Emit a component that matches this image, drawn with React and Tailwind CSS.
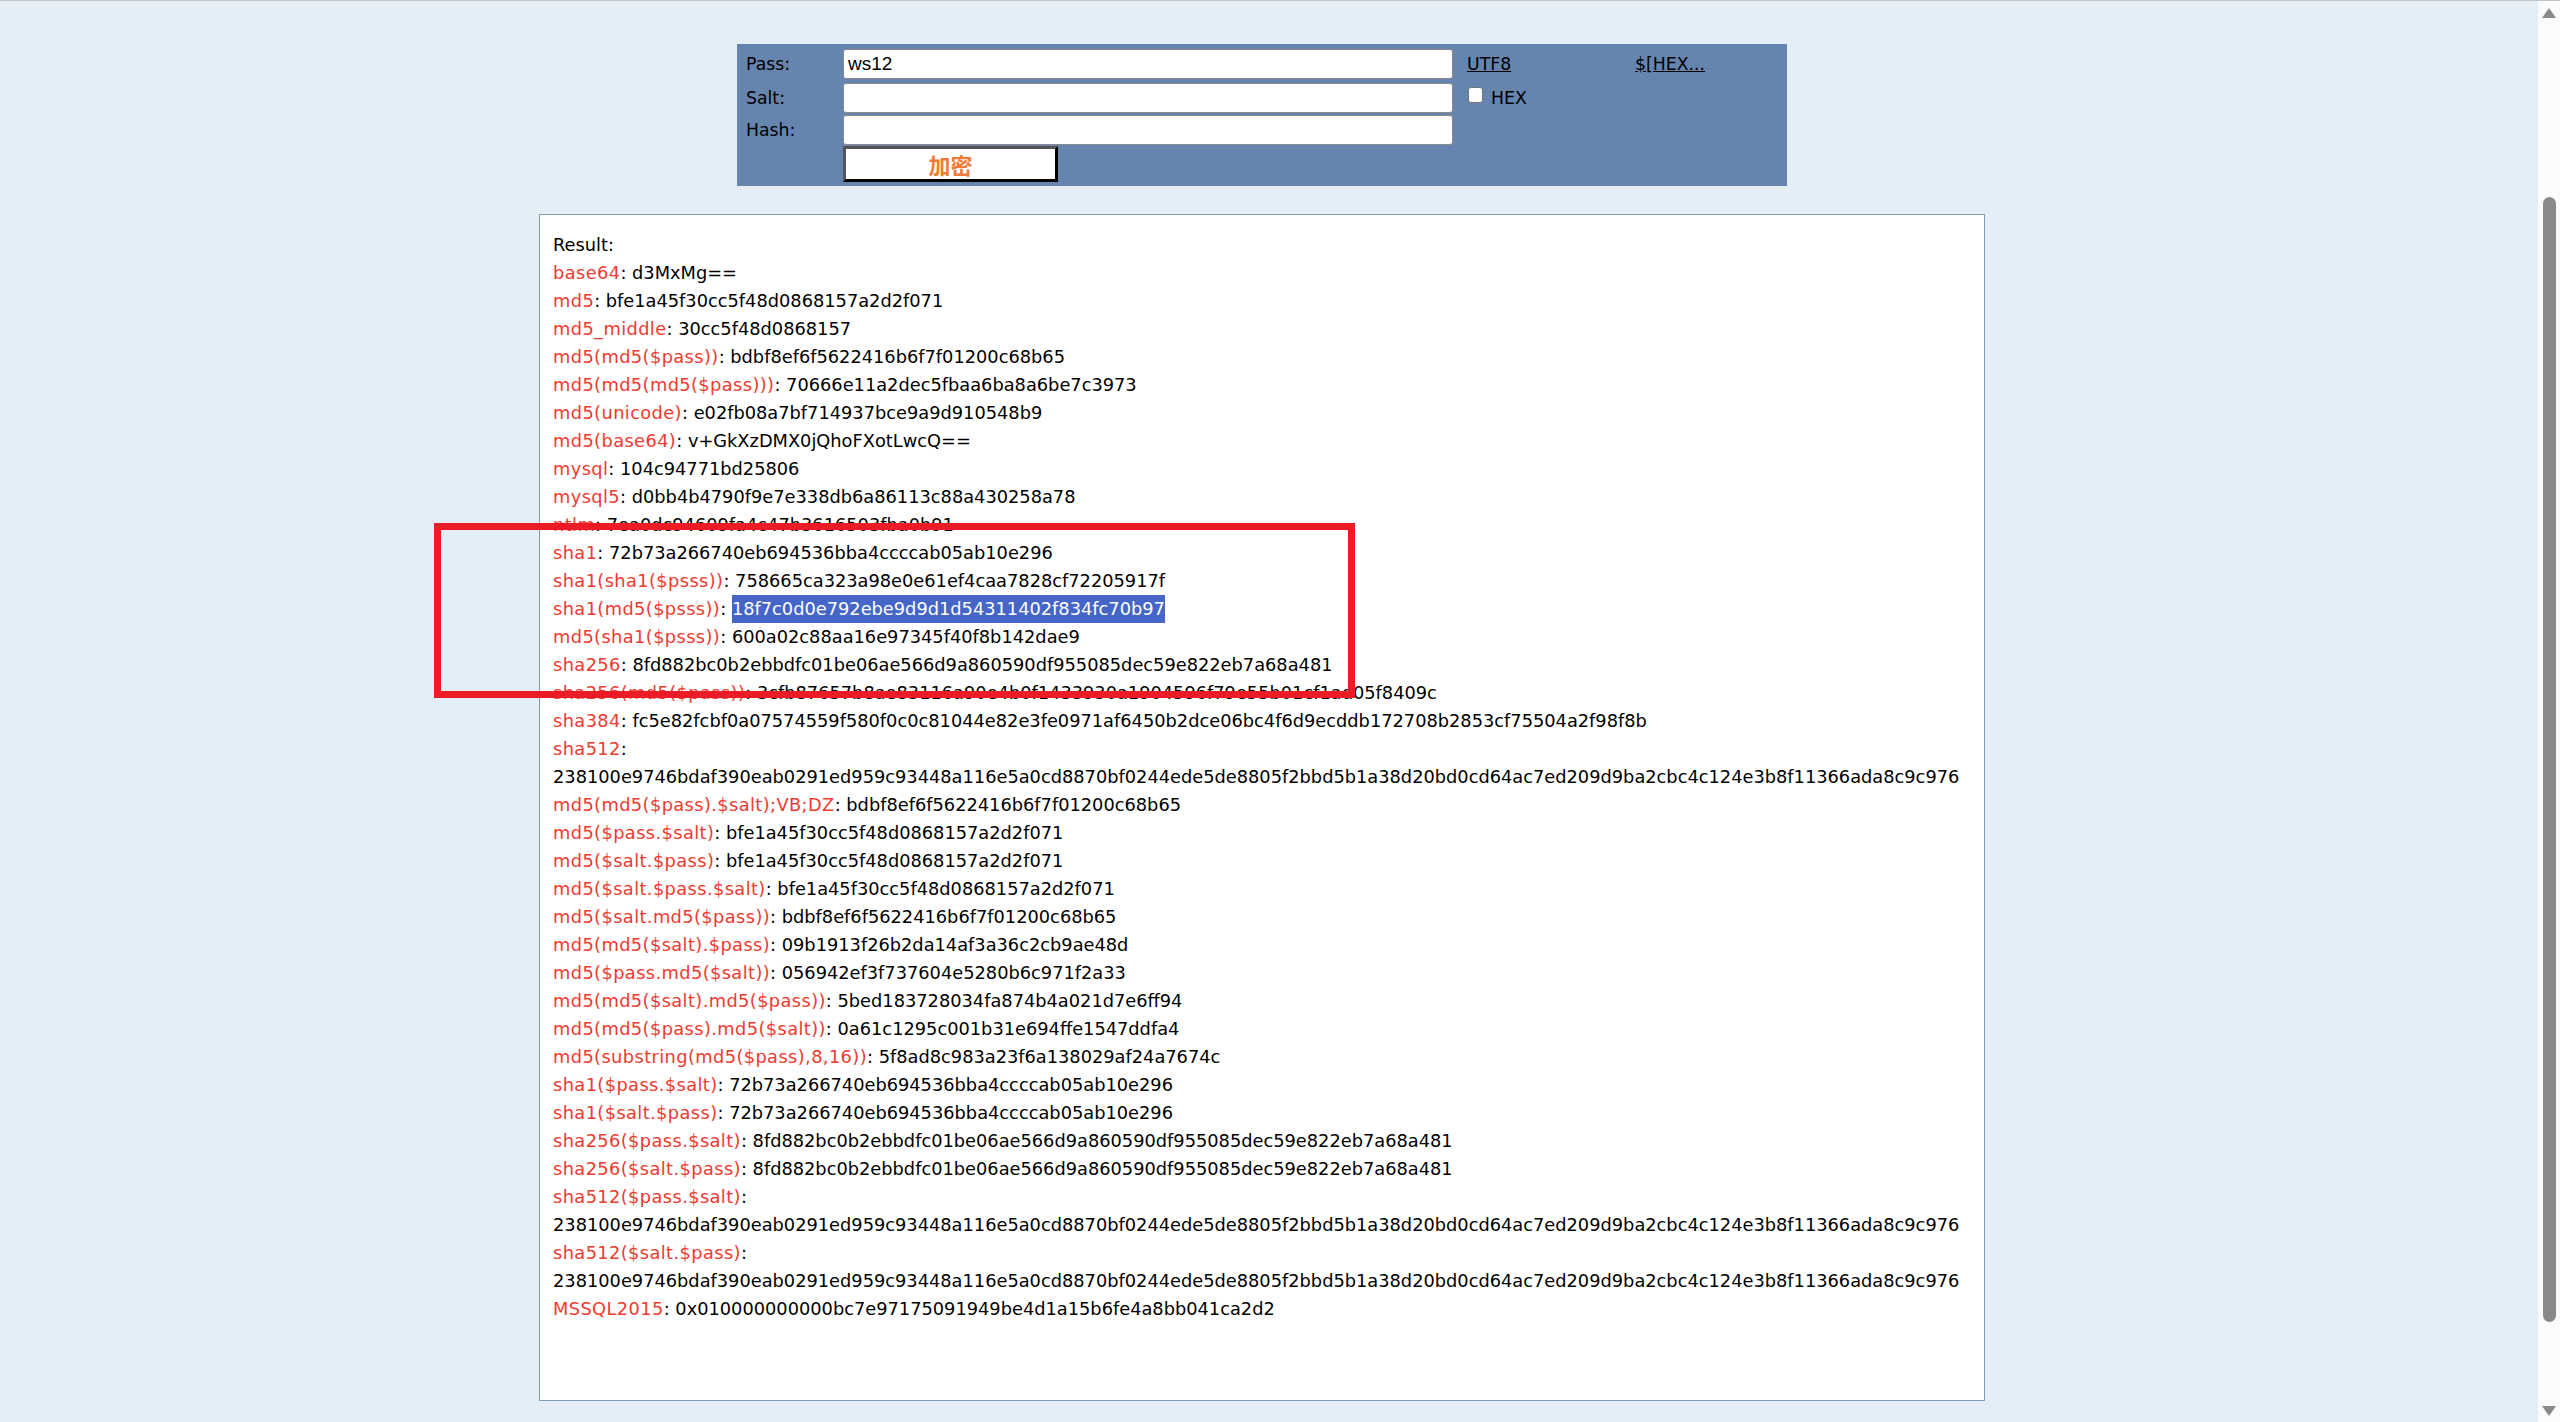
const SHA512 =
  '238100e9746bdaf390eab0291ed959c93448a116e5a0cd8870bf0244ede5de8805f2bbd5b1a38d20bd0cd64ac7ed209d9ba2cbc4c124e3b8f11366ada8c9c976';
const SHA256 = '8fd882bc0b2ebbdfc01be06ae566d9a860590df955085dec59e822eb7a68a481';
const SHA1 = '72b73a266740eb694536bba4ccccab05ab10e296';
const MD5 = 'bfe1a45f30cc5f48d0868157a2d2f071';
const MD5MD5 = 'bdbf8ef6f5622416b6f7f01200c68b65';

const lines = [
  { k: 'base64', v: 'd3MxMg==' },
  { k: 'md5', v: MD5 },
  { k: 'md5_middle', v: '30cc5f48d0868157' },
  { k: 'md5(md5($pass))', v: MD5MD5 },
  { k: 'md5(md5(md5($pass)))', v: '70666e11a2dec5fbaa6ba8a6be7c3973' },
  { k: 'md5(unicode)', v: 'e02fb08a7bf714937bce9a9d910548b9' },
  { k: 'md5(base64)', v: 'v+GkXzDMX0jQhoFXotLwcQ==' },
  { k: 'mysql', v: '104c94771bd25806' },
  { k: 'mysql5', v: 'd0bb4b4790f9e7e338db6a86113c88a430258a78' },
  { k: 'ntlm', v: '7ea0dc94609fa4c47b3616503fba0b91' },
  { k: 'sha1', v: SHA1 },
  { k: 'sha1(sha1($psss))', v: '758665ca323a98e0e61ef4caa7828cf72205917f' },
  { k: 'sha1(md5($psss))', v: '18f7c0d0e792ebe9d9d1d54311402f834fc70b97', sel: true },
  { k: 'md5(sha1($psss))', v: '600a02c88aa16e97345f40f8b142dae9' },
  { k: 'sha256', v: SHA256 },
  { k: 'sha256(md5($pass))', v: '3cfb87657b8ae83116a90e4b0f1433930a1904596f79e55b01cf1ad05f8409c' },
  { k: 'sha384', v: 'fc5e82fcbf0a07574559f580f0c0c81044e82e3fe0971af6450b2dce06bc4f6d9ecddb172708b2853cf75504a2f98f8b' },
  { k: 'sha512', v: '' },
  { raw: SHA512 },
  { k: 'md5(md5($pass).$salt);VB;DZ', v: MD5MD5 },
  { k: 'md5($pass.$salt)', v: MD5 },
  { k: 'md5($salt.$pass)', v: MD5 },
  { k: 'md5($salt.$pass.$salt)', v: MD5 },
  { k: 'md5($salt.md5($pass))', v: MD5MD5 },
  { k: 'md5(md5($salt).$pass)', v: '09b1913f26b2da14af3a36c2cb9ae48d' },
  { k: 'md5($pass.md5($salt))', v: '056942ef3f737604e5280b6c971f2a33' },
  { k: 'md5(md5($salt).md5($pass))', v: '5bed183728034fa874b4a021d7e6ff94' },
  { k: 'md5(md5($pass).md5($salt))', v: '0a61c1295c001b31e694ffe1547ddfa4' },
  { k: 'md5(substring(md5($pass),8,16))', v: '5f8ad8c983a23f6a138029af24a7674c' },
  { k: 'sha1($pass.$salt)', v: SHA1 },
  { k: 'sha1($salt.$pass)', v: SHA1 },
  { k: 'sha256($pass.$salt)', v: SHA256 },
  { k: 'sha256($salt.$pass)', v: SHA256 },
  { k: 'sha512($pass.$salt)', v: '' },
  { raw: SHA512 },
  { k: 'sha512($salt.$pass)', v: '' },
  { raw: SHA512 },
  { k: 'MSSQL2015', v: '0x010000000000bc7e97175091949be4d1a15b6fe4a8bb041ca2d2' },
];

function Input({ value }) {
  return (
    <div className="h-[30px] w-[610px] bg-white border border-[#8a8a8a] rounded-[3px] px-[4px] flex items-center text-[19px] text-black font-['Liberation_Sans',Arial,sans-serif]">
      {value}
    </div>
  );
}

export default function App() {
  return (
    <div className="relative flex h-[1422px] w-[2560px] overflow-hidden border-t border-[#c4c4c4] font-['DejaVu_Sans',Verdana,sans-serif] text-[17.3px] text-black">
      <div className="w-[2538px] bg-[#e4eef6]">
        <div className="w-[2524px] flex flex-col items-center pt-[43px]">
          {/* form panel */}
          <div className="w-[1050px] h-[142px] bg-[#6685ae] pt-[5px]">
            <div className="grid grid-cols-[106px_610px_182px_1fr] items-center">
              <span className="pl-[9px] pt-[2px]">Pass:</span>
              <Input value="ws12" />
              <a className="underline pl-[14px] pt-[2px]">UTF8</a>
              <a className="underline pt-[2px]">$[HEX...</a>
            </div>
            <div className="grid grid-cols-[106px_610px_1fr] items-center mt-[4px]">
              <span className="pl-[9px] pt-[2px]">Salt:</span>
              <Input value="" />
              <div className="flex items-center pl-[15px]">
                <span className="w-[15px] h-[16px] bg-white border border-[#767676] rounded-[3px] -mt-[7px]" />
                <span className="ml-[8px] pt-[2px]">HEX</span>
              </div>
            </div>
            <div className="grid grid-cols-[106px_610px_1fr] items-center mt-[2px]">
              <span className="pl-[9px] pt-[2px]">Hash:</span>
              <Input value="" />
            </div>
            <div className="grid grid-cols-[106px_1fr] mt-[1px]">
              <span />
              <button className="w-[215px] h-[36px] bg-white border-[3px] border-t-[#555] border-l-[#555] border-b-black border-r-black text-[#f07a3a] font-bold text-[22px] font-['Noto_Sans_CJK_SC',sans-serif] flex items-center justify-center">
                加密
              </button>
            </div>
          </div>

          {/* result */}
          <div className="mt-[28px] w-[1446px] h-[1187px] bg-white border border-[#7f9db9] pl-[13px] pt-[16px] leading-[28px] text-[17.8px]">
            <div>Result:</div>
            {lines.map((l, i) =>
              l.raw ? (
                <div key={i}>{l.raw}</div>
              ) : (
                <div key={i} className="whitespace-nowrap">
                  <span className="text-[#ef3b2f] tracking-[0.4px]">{l.k}</span>
                  <span>: </span>
                  {l.sel ? (
                    <span className="bg-[#4566c8] text-white inline-block">{l.v}</span>
                  ) : (
                    <span>{l.v}</span>
                  )}
                </div>
              )
            )}
          </div>
        </div>
      </div>

      {/* scrollbar */}
      <div className="w-[22px] bg-[#fbfbfb] relative flex flex-col items-center">
        <svg width="14" height="10" viewBox="0 0 14 10" className="mt-[7px]">
          <polygon points="7,0 14,10 0,10" fill="#8a8a8a" />
        </svg>
        <div className="mt-[179px] w-[13px] h-[1125px] rounded-full bg-[#8a8a8a]" />
        <svg width="14" height="10" viewBox="0 0 14 10" className="mt-auto mb-[6px]">
          <polygon points="0,0 14,0 7,10" fill="#8a8a8a" />
        </svg>
      </div>

      {/* annotation box */}
      <div className="absolute left-[434px] top-[522px] w-[921px] h-[175px] border-[7px] border-[#ec1c26]" />
    </div>
  );
}
